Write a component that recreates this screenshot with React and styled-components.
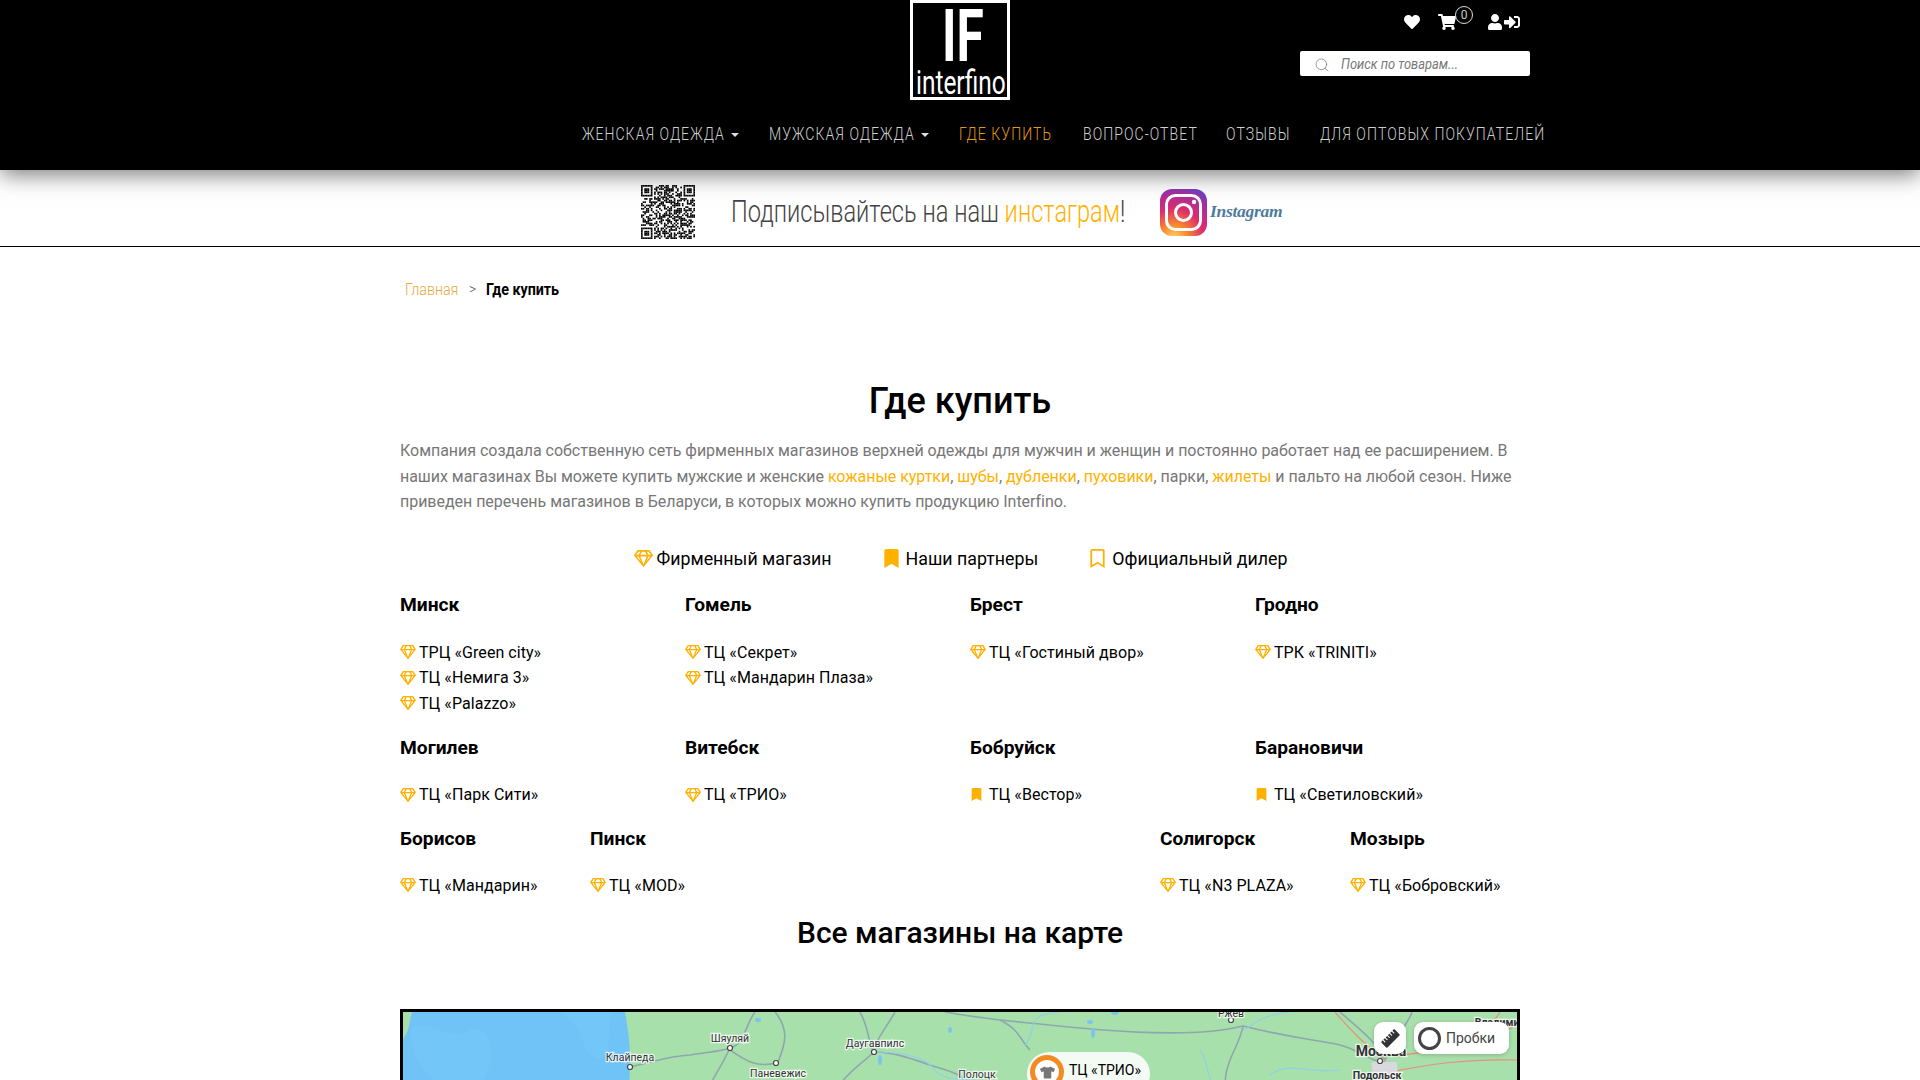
import React from "react";
import styled, { createGlobalStyle } from "styled-components";
import { FaHeart, FaShoppingCart, FaUser, FaSignInAlt, FaRegGem, FaBookmark, FaRegBookmark, FaTshirt, FaRulerHorizontal } from "react-icons/fa";
import { Search } from "lucide-react";

const Global = createGlobalStyle`
  html, body { margin: 0; padding: 0; background: #fff; }
  body { height: 100vh; overflow: hidden; font-family: Roboto, "Liberation Sans", sans-serif; color: #000; }
  a { text-decoration: none; color: inherit; }
  * { box-sizing: border-box; }
`;

const ORANGE = "#ffb100";

/* No condensed face is installed: a condensed run is Roboto squeezed horizontally inside a box of the final width. */
const CondBox = styled.span`
  display: inline-block; width: ${p => p.$w}px; white-space: nowrap; flex: none;
`;
const CondInner = styled.span`
  display: inline-block; transform-origin: 0 50%; transform: scaleX(${p => p.$s});
`;
const Cond = ({ w, s, children }) => (
  <CondBox $w={w}><CondInner $s={s}>{children}</CondInner></CondBox>
);

const Header = styled.header`
  height: 170px; background: #000; position: relative; z-index: 2;
  box-shadow: 0 4px 22px rgba(0,0,0,.55);
`;
const TopRow = styled.div`height: 118px; display: flex; justify-content: center; position: relative;`;
const Logo = styled.a`
  width: 100px; height: 100px; border: 3px solid #fff; background: #000; color: #fff;
  display: flex; flex-direction: column; overflow: hidden; padding-left: 3px;
`;
const LogoMark = styled.span`
  font: 700 73px/54px Roboto, sans-serif; height: 54px; margin: 6px 0 0 26px;
`;
const LogoName = styled.span`font: 400 33px/28px Roboto, sans-serif; margin-top: 6px;`;
const Tools = styled.div`
  position: absolute; left: 1300px; top: 0; width: 230px; display: flex; flex-direction: column;
`;
const IconRow = styled.div`
  height: 51px; display: flex; align-items: center; color: #fff; padding: 0 0 7px 104px; font-size: 16px;
`;
const CartWrap = styled.span`position: relative; display: inline-flex; margin-left: 18px; font-size: 18px;`;
const CartBadge = styled.span`
  position: absolute; left: 17px; top: -7px; width: 18px; height: 18px; border: 1px solid #ddd; border-radius: 50%;
  font: 400 12px/16px Roboto, sans-serif; text-align: center; color: #ccc; background: #000;
`;
const UserIcons = styled.span`display: inline-flex; align-items: center; margin-left: 31px; gap: 1px; font-size: 16px;`;
const SearchBox = styled.div`
  height: 25px; border-radius: 2px; background: #fff; display: flex; align-items: center; padding: 2px 0 0 14px; gap: 11px;
  color: #777; font: italic 400 14px/23px Roboto, sans-serif;
`;
const Nav = styled.nav`
  display: flex; gap: 30px; padding-left: 582px; height: 32px; align-items: center;
`;
const NavItem = styled.a`
  font: 300 18px/32px Roboto, sans-serif; letter-spacing: 1.35px; white-space: nowrap;
  color: ${p => (p.$active ? "#e39a13" : "#cfcfcf")};
  display: inline-flex; align-items: center; gap: 6px;
`;
const Caret = styled.span`
  width: 0; height: 0; border-left: 4px solid transparent; border-right: 4px solid transparent; border-top: 4px solid #ddd; margin-top: 2px;
`;
const Banner = styled.section`
  height: 77px; border-bottom: 1px solid #000; display: flex; align-items: center; padding: 8px 0 0 641px;
`;
const BannerText = styled.p`
  margin: 0 0 0 36px; font: 300 31px/34px Roboto, sans-serif; color: #444;
`;
const Orange = styled.a`color: ${ORANGE};`;
const Wordmark = styled.span`
  font: italic 700 17.5px/24px "Liberation Serif", serif; color: #4d7b9d; margin: 0 0 2px 2px; letter-spacing: -.3px;
`;
const Instagram = styled.a`display: inline-flex; align-items: center; margin-left: 34px;`;
const Main = styled.main`width: 1140px; margin-left: 400px;`;
const Crumbs = styled.div`
  margin: 30px 0 0 5px; height: 24px; display: flex; gap: 10px; align-items: center; font: 300 17px/24px Roboto, sans-serif;
`;
const CrumbLink = styled.a`color: #e9a93a;`;
const CrumbSep = styled.span`color: #555; font-size: 14px;`;
const CrumbNow = styled.b`font-weight: 700;`;
const Title = styled.h1`
  width: 1120px; margin: 76px 0 0; text-align: center; font: 500 36px/48px Roboto, sans-serif;
`;
const Lead = styled.p`
  width: 1120px; margin: 13px 0 0; font: 400 16px/25.5px Roboto, sans-serif; color: #777; letter-spacing: -.03px;
`;
const Legend = styled.div`
  width: 1120px; margin-top: 29px; height: 30px; display: flex; justify-content: center; gap: 50px; align-items: center; padding-left: 2px;
`;
const LegendItem = styled.span`
  font: 400 17.8px/30px Roboto, sans-serif; display: inline-flex; align-items: center; gap: ${p => p.$gap}px;
  svg { color: ${ORANGE}; font-size: 19px; }
`;
const Cities = styled.div`
  display: grid; grid-template-columns: repeat(${p => p.$cols}, ${p => p.$w}px); margin-top: ${p => p.$top}px;
`;
const City = styled.div`grid-column: ${p => p.$col || "auto"};`;
const CityName = styled.h3`margin: 0 0 ${p => p.$gap}px; font: 700 19.2px/24px Roboto, sans-serif;`;
const Shops = styled.ul`list-style: none; margin: 0; padding: 0;`;
const Shop = styled.li`
  font: 400 16px/25.5px Roboto, sans-serif; letter-spacing: .05px; display: flex; align-items: center;
`;
const ShopIcon = styled.span`
  width: 19px; flex: none; display: inline-flex; align-items: center; color: ${ORANGE}; font-size: ${p => p.$size}px;
`;
const Subtitle = styled.h2`
  width: 1120px; margin: 14px 0 0; text-align: center; font: 500 30px/42px Roboto, sans-serif;
`;
const MapFrame = styled.div`
  position: relative; width: 1120px; height: 400px; margin-top: 55px; border: 3px solid #000; overflow: hidden; background: #a8e0ab;
`;
const MapControl = styled.div`
  position: absolute; top: 10px; height: 32px; border-radius: 9px; background: #fff; display: flex; align-items: center;
  box-shadow: 0 1px 4px rgba(0,0,0,.2); color: #333;
`;
const RulerBtn = styled(MapControl)`left: 971px; width: 32px; justify-content: center; font-size: 19px;`;
const TrafficBtn = styled(MapControl)`left: 1011px; width: 95px; padding-left: 4px; gap: 5px; font: 400 14px/32px Roboto, sans-serif; color: #444;`;
const TrafficRing = styled.span`width: 23px; height: 23px; border-radius: 50%; border: 3px solid #444; background: #fff;`;
const Pin = styled.div`
  position: absolute; left: 624px; top: 40px; height: 44px; padding: 3px 9px 0 3px; border-radius: 22px; background: #f4faf4;
  display: flex; align-items: flex-start; gap: 5px; font: 400 14px/30px Roboto, sans-serif;
`;
const PinDot = styled.span`
  width: 34px; height: 34px; border-radius: 50%; border: 5px solid #f58a22; background: #fff; display: flex; align-items: center; justify-content: center;
  color: #777; font-size: 15px;
`;

const QR = () => {
  const n = 33, c = [];
  const inF = (x, y, ox, oy) => x >= ox && x < ox + 7 && y >= oy && y < oy + 7;
  const fVal = (x, y, ox, oy) => {
    const a = x - ox, b = y - oy;
    return a === 0 || a === 6 || b === 0 || b === 6 || (a >= 2 && a <= 4 && b >= 2 && b <= 4);
  };
  let seed = 20231;
  const rnd = () => { seed = (seed * 16807) % 2147483647; return seed / 2147483647; };
  for (let y = 0; y < n; y++) for (let x = 0; x < n; x++) {
    const r = rnd();
    let on;
    const fs = [[0, 0], [26, 0], [0, 26]].find(([a, b]) => inF(x, y, a, b));
    if (fs) on = fVal(x, y, fs[0], fs[1]);
    else if ((x < 8 && y < 8) || (x > 24 && y < 8) || (x < 8 && y > 24)) on = false;
    else on = r < 0.52;
    if (on) c.push(<rect key={x + "-" + y} x={x} y={y} width="1.02" height="1.02" />);
  }
  return <svg width="54" height="54" viewBox="0 0 33 33" style={{ flex: "none" }}>{c}</svg>;
};

const InstaIcon = () => (
  <svg width="49" height="49" viewBox="0 0 49 49" style={{ flex: "none" }}>
    <defs>
      <radialGradient id="ig" cx="0.3" cy="1.05" r="1.15">
        <stop offset="0" stopColor="#fdd26a" />
        <stop offset="0.25" stopColor="#f98a2c" />
        <stop offset="0.55" stopColor="#dd2c6c" />
        <stop offset="0.85" stopColor="#a22fa5" />
        <stop offset="1" stopColor="#6a45c6" />
      </radialGradient>
    </defs>
    <rect x="1" y="1" width="47" height="47" rx="12" fill="url(#ig)" />
    <rect x="7.5" y="7.5" width="34" height="34" rx="9" fill="none" stroke="#fff" strokeWidth="3" />
    <circle cx="24.5" cy="24.5" r="8" fill="none" stroke="#fff" strokeWidth="3" />
    <circle cx="35" cy="14" r="2.2" fill="#fff" />
  </svg>
);

const labelStyle = { font: '400 10.5px Roboto, sans-serif', fill: '#333', paintOrder: 'stroke', stroke: 'rgba(255,255,255,.75)', strokeWidth: 2.5 };

const MapArt = () => (
  <svg width="1114" height="394" viewBox="403 1012 1114 394" style={{ display: "block" }}>
    <rect x="403" y="1012" width="1114" height="394" fill="#a8e0ab" />
    <path d="M403 1012H625C628 1030 632 1050 629 1085V1406H403Z" fill="#6fc3f7" />
    <path d="M410 1030C430 1015 450 1045 470 1030C490 1020 500 1060 480 1085H440C420 1070 410 1050 410 1030Z" fill="#73c6f8" />
    <path d="M560 1012C590 1030 575 1050 600 1060C615 1050 605 1025 612 1012Z" fill="#73c6f8" />
    <path d="M403 1012H412L408 1030L403 1040Z" fill="#a8e0ab" />
    <g fill="none" stroke="#8fa6b0" strokeWidth="1.6">
      <path d="M630 1067C660 1060 670 1056 690 1055C705 1052 720 1052 730 1048C745 1044 745 1025 755 1012" />
      <path d="M775 1012C790 1030 785 1045 778 1062" />
      <path d="M730 1048C722 1065 715 1075 710 1085" />
      <path d="M730 1050C745 1060 755 1068 776 1063" />
      <path d="M860 1012C870 1030 868 1045 874 1052C860 1065 845 1075 840 1085" />
      <path d="M895 1012C885 1030 875 1040 874 1052" />
      <path d="M874 1052C895 1052 915 1060 930 1065C945 1070 960 1072 970 1085" />
      <path d="M945 1012C960 1015 985 1018 1000 1020C1020 1030 1020 1040 1030 1050" />
      <path d="M1000 1020C1060 1026 1180 1042 1243 1026C1300 1040 1320 1040 1340 1045C1360 1050 1370 1062 1385 1062" />
      <path d="M1243 1026C1240 1045 1225 1060 1225 1085" />
      <path d="M1340 1012C1360 1030 1375 1040 1385 1060C1400 1030 1410 1020 1412 1012" />
    </g>
    <g fill="none" stroke="#90cfe8" strokeWidth="1.2">
      <path d="M874 1052C900 1052 925 1056 935 1070C940 1078 955 1080 975 1080" />
      <path d="M1025 1045C1040 1030 1020 1015 1060 1012" />
      <path d="M1200 1050C1210 1065 1205 1075 1215 1085" />
      <path d="M1270 1075C1290 1060 1310 1075 1340 1070" />
      <path d="M1290 1012C1260 1015 1255 1025 1243 1030" />
    </g>
    <g fill="none" stroke="#e88f7d" strokeWidth="1.2">
      <path d="M1335 1012C1350 1030 1365 1045 1385 1060" />
      <path d="M1500 1012C1490 1030 1460 1050 1400 1055" />
      <path d="M1370 1075C1400 1072 1440 1058 1517 1060" />
      <path d="M1430 1040C1470 1045 1490 1040 1517 1025" />
    </g>
    <path d="M1372 1062C1370 1075 1380 1086 1386 1090C1395 1082 1400 1070 1396 1062Z" fill="#d8d8de" />
    <g fill="#7cc4ee">
      <ellipse cx="758" cy="1020" rx="3" ry="2" />
      <ellipse cx="880" cy="1060" rx="2" ry="5" />
      <ellipse cx="950" cy="1030" rx="2" ry="3" />
      <ellipse cx="1090" cy="1022" rx="3" ry="2" />
      <ellipse cx="1093" cy="1033" rx="2" ry="5" />
      <ellipse cx="1115" cy="1012" rx="4" ry="3" />
    </g>
    <g fill="#fff" stroke="#444" strokeWidth="1.2">
      <circle cx="630" cy="1067" r="2.5" /><circle cx="730" cy="1048" r="2.5" /><circle cx="776" cy="1063" r="2.5" />
      <circle cx="874" cy="1052" r="2.5" /><circle cx="1231" cy="1020" r="2.5" /><circle cx="1380" cy="1061" r="2.5" />
    </g>
    <text x="630" y="1061" textAnchor="middle" style={labelStyle}>Клайпеда</text>
    <text x="730" y="1042" textAnchor="middle" style={labelStyle}>Шяуляй</text>
    <text x="875" y="1047" textAnchor="middle" style={labelStyle}>Даугавпилс</text>
    <text x="778" y="1077" textAnchor="middle" style={labelStyle}>Паневежис</text>
    <text x="977" y="1078" textAnchor="middle" style={labelStyle}>Полоцк</text>
    <text x="1231" y="1017" textAnchor="middle" style={labelStyle}>Ржев</text>
    <text x="1381" y="1056" textAnchor="middle" style={{ ...labelStyle, font: '700 14px Roboto, sans-serif' }}>Москва</text>
    <text x="1377" y="1079" textAnchor="middle" style={{ ...labelStyle, font: '700 10.5px Roboto, sans-serif' }}>Подольск</text>
    <text x="1500" y="1026" textAnchor="middle" style={{ ...labelStyle, font: '700 10.5px Roboto, sans-serif' }}>Владимир</text>
  </svg>
);

const rows = [
  { cols: 4, w: 285, top: 19, gap: 23, items: [
    { name: "Минск", shops: ["ТРЦ «Green city»", "ТЦ «Немига 3»", "ТЦ «Palazzo»"] },
    { name: "Гомель", shops: ["ТЦ «Секрет»", "ТЦ «Мандарин Плаза»"] },
    { name: "Брест", shops: ["ТЦ «Гостиный двор»"] },
    { name: "Гродно", shops: ["ТРК «TRINITI»"] },
  ]},
  { cols: 4, w: 285, top: 20, gap: 22, items: [
    { name: "Могилев", shops: ["ТЦ «Парк Сити»"] },
    { name: "Витебск", shops: ["ТЦ «ТРИО»"] },
    { name: "Бобруйск", shops: ["ТЦ «Вестор»"], mark: true },
    { name: "Барановичи", shops: ["ТЦ «Светиловский»"], mark: true },
  ]},
  { cols: 6, w: 190, top: 19, gap: 22, items: [
    { name: "Борисов", shops: ["ТЦ «Мандарин»"] },
    { name: "Пинск", shops: ["ТЦ «MOD»"] },
    { name: "Солигорск", shops: ["ТЦ «N3 PLAZA»"], col: 5 },
    { name: "Мозырь", shops: ["ТЦ «Бобровский»"] },
  ]},
];

export default function App() {
  return (
    <>
      <Global />
      <Header>
        <TopRow>
          <Logo href="#">
            <LogoMark><Cond w={46} s={0.68}>IF</Cond></LogoMark>
            <LogoName><Cond w={90} s={0.74}>interfino</Cond></LogoName>
          </Logo>
          <Tools>
            <IconRow>
              <FaHeart />
              <CartWrap><FaShoppingCart /><CartBadge>0</CartBadge></CartWrap>
              <UserIcons><FaUser /><FaSignInAlt /></UserIcons>
            </IconRow>
            <SearchBox><Search size={16} strokeWidth={1.1} color="#777" /><Cond w={120} s={0.92}>Поиск по товарам...</Cond></SearchBox>
          </Tools>
        </TopRow>
        <Nav>
          <NavItem href="#"><Cond w={143} s={0.78}>ЖЕНСКАЯ ОДЕЖДА</Cond><Caret /></NavItem>
          <NavItem href="#"><Cond w={146} s={0.78}>МУЖСКАЯ ОДЕЖДА</Cond><Caret /></NavItem>
          <NavItem href="#" $active><Cond w={94} s={0.78}>ГДЕ КУПИТЬ</Cond></NavItem>
          <NavItem href="#"><Cond w={113} s={0.78}>ВОПРОС-ОТВЕТ</Cond></NavItem>
          <NavItem href="#"><Cond w={64} s={0.78}>ОТЗЫВЫ</Cond></NavItem>
          <NavItem href="#"><Cond w={226} s={0.78}>ДЛЯ ОПТОВЫХ ПОКУПАТЕЛЕЙ</Cond></NavItem>
        </Nav>
      </Header>
      <Banner>
        <QR />
        <BannerText><Cond w={394} s={0.762}>Подписывайтесь на наш <Orange href="#">инстаграм</Orange>!</Cond></BannerText>
        <Instagram href="#"><InstaIcon /><Wordmark>Instagram</Wordmark></Instagram>
      </Banner>
      <Main>
        <Crumbs>
          <CrumbLink href="#"><Cond w={54} s={0.84}>Главная</Cond></CrumbLink>
          <CrumbSep>&gt;</CrumbSep>
          <CrumbNow><Cond w={74} s={0.84}>Где купить</Cond></CrumbNow>
        </Crumbs>
        <Title>Где купить</Title>
        <Lead>
          Компания создала собственную сеть фирменных магазинов верхней одежды для мужчин и женщин и постоянно работает над ее расширением. В наших магазинах Вы можете купить мужские и женские <Orange href="#">кожаные куртки</Orange>, <Orange href="#">шубы</Orange>, <Orange href="#">дубленки</Orange>, <Orange href="#">пуховики</Orange>, парки, <Orange href="#">жилеты</Orange> и пальто на любой сезон. Ниже приведен перечень магазинов в Беларуси, в которых можно купить продукцию Interfino.
        </Lead>
        <Legend>
          <LegendItem $gap={3}><FaRegGem />Фирменный магазин</LegendItem>
          <LegendItem $gap={5}><FaBookmark />Наши партнеры</LegendItem>
          <LegendItem $gap={5}><FaRegBookmark />Официальный дилер</LegendItem>
        </Legend>
        {rows.map((r, i) => (
          <Cities key={i} $cols={r.cols} $w={r.w} $top={r.top}>
            {r.items.map(c => (
              <City key={c.name} $col={c.col}>
                <CityName $gap={r.gap}>{c.name}</CityName>
                <Shops>
                  {c.shops.map(s => (
                    <Shop key={s}>
                      <ShopIcon $size={c.mark ? 13 : 16}>{c.mark ? <FaBookmark /> : <FaRegGem />}</ShopIcon>
                      {s}
                    </Shop>
                  ))}
                </Shops>
              </City>
            ))}
          </Cities>
        ))}
        <Subtitle>Все магазины на карте</Subtitle>
        <MapFrame>
          <MapArt />
          <Pin><PinDot><FaTshirt /></PinDot>ТЦ «ТРИО»</Pin>
          <RulerBtn><FaRulerHorizontal style={{ transform: "rotate(-45deg)" }} /></RulerBtn>
          <TrafficBtn><TrafficRing />Пробки</TrafficBtn>
        </MapFrame>
      </Main>
    </>
  );
}
